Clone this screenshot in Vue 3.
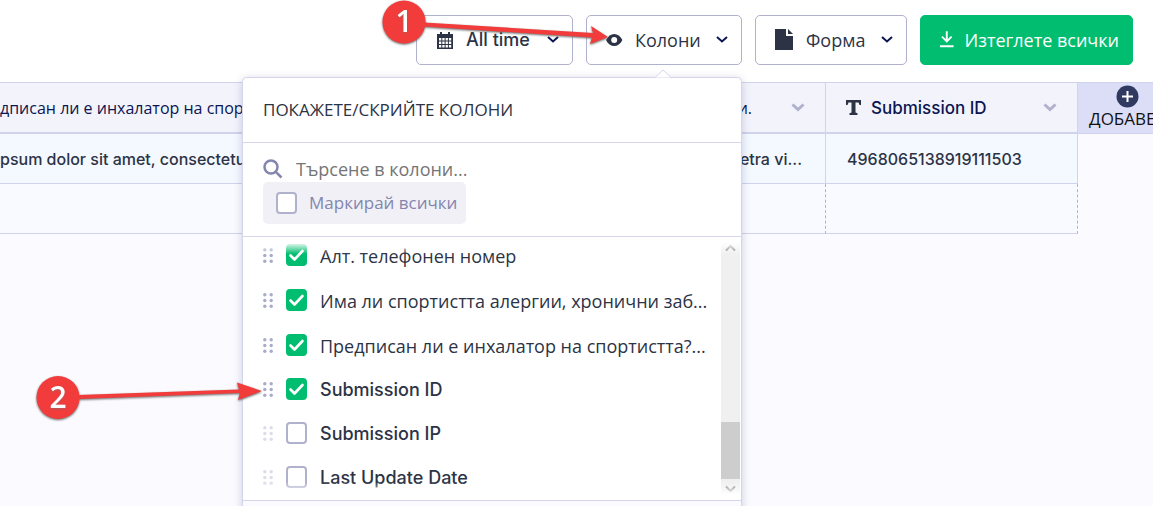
<script setup>
import { ref } from 'vue'

const search = ref('')
const all = ref(false)
const columns = ref([
  { label: 'Алт. телефонен номер', on: true },
  { label: 'Има ли спортистта алергии, хронични заб...', on: true },
  { label: 'Предписан ли е инхалатор на спортистта?...', on: true },
  { label: 'Submission ID', on: true, latin: true },
  { label: 'Submission IP', on: false, latin: true },
  { label: 'Last Update Date', on: false, latin: true },
])
</script>

<template>
  <div class="page">
    <header class="toolbar">
      <div class="holder">
        <button type="button" class="btn time latin">
          <svg class="icon" width="19" height="19" viewBox="0 0 19 19" fill="#2c3345">
            <path d="M1 3h3V1h2v2h6V1h2v2h3v15H1z" />
            <path d="M3 7h2.300v2.600H3zM6.300 7h2.300v2.600H6.300zM9.600 7h2.300v2.600H9.600zM12.900 7h2.300v2.600h-2.300zM3 10.600h2.300v2.400H3zM6.300 10.600h2.300v2.400H6.300zM9.600 10.600h2.300v2.400H9.600zM12.900 10.600h2.300v2.400h-2.300zM3 14h2.300v2.400H3zM6.300 14h2.300v2.400H6.300zM9.600 14h2.300v2.400H9.600zM12.900 14h2.300v2.400h-2.300z" fill="#fff" />
          </svg>
          <span>All time</span>
          <svg class="chev" width="12" height="8" viewBox="0 0 12 8"><path d="M1 1L6 5.500L11 1" /></svg>
        </button>
        <svg class="callout one" width="230" height="50" viewBox="0 0 230 50">
          <g class="shade">
            <path d="M42 22.500L211 33L209 26L226 37L208 44L210 37.500L42 26.500z" />
            <circle cx="22" cy="22" r="21.500" />
          </g>
          <text x="22" y="32">1</text>
        </svg>
      </div>

      <div class="holder">
        <button type="button" class="btn cols">
          <svg class="icon" width="17" height="14" viewBox="0 0 17 14">
            <path fill="#2c3345" d="M0 7C2 3 5 1 8.200 1s6.200 2 8.200 6c-2 4-5 6-8.200 6S2 11 0 7z" />
            <circle cx="8.200" cy="7" r="3" fill="#fff" />
          </svg>
          <span>Колони</span>
          <svg class="chev" width="12" height="8" viewBox="0 0 12 8"><path d="M1 1L6 5.500L11 1" /></svg>
        </button>

        <section class="panel">
          <svg class="caret" width="16" height="9" viewBox="0 0 16 9"><path d="M0 8.500L8 1l8 7.500" fill="#fff" stroke="#d5d6ec" /></svg>
          <h2>ПОКАЖЕТЕ/СКРИЙТЕ КОЛОНИ</h2>
          <div class="filter">
            <label class="search">
              <svg width="20" height="20" viewBox="0 0 20 20" fill="none" stroke="#8386ae" stroke-width="2.500">
                <circle cx="8" cy="8" r="6.500" /><path d="M12.800 12.800L18.500 18.500" />
              </svg>
              <input v-model="search" type="text" placeholder="Търсене в колони..." aria-label="Търсене в колони" />
            </label>
            <label class="all"><input v-model="all" type="checkbox" class="box" /><span>Маркирай всички</span></label>
          </div>
          <div class="scroller">
            <ul>
              <li v-for="c in columns" :key="c.label" :class="{ off: !c.on }">
                <svg class="grip" width="10" height="15" viewBox="0 0 10 15" fill="#a9abca">
                  <circle cx="1.800" cy="1.800" r="1.700" /><circle cx="8.200" cy="1.800" r="1.700" />
                  <circle cx="1.800" cy="7.500" r="1.700" /><circle cx="8.200" cy="7.500" r="1.700" />
                  <circle cx="1.800" cy="13.200" r="1.700" /><circle cx="8.200" cy="13.200" r="1.700" />
                </svg>
                <label>
                  <span class="tick">
                    <input v-model="c.on" type="checkbox" class="box" />
                    <svg v-if="c.on" width="21" height="22" viewBox="0 0 21 22"><path d="M4.500 11.500L8.500 15.500L16.500 7" /></svg>
                  </span>
                  <span class="name" :class="{ latin: c.latin }">{{ c.label }}</span>
                </label>
              </li>
            </ul>
            <div class="bar">
              <svg width="11" height="8" viewBox="0 0 11 8"><path d="M1 6.500L5.500 2L10 6.500" /></svg>
              <div class="thumb"></div>
              <svg width="11" height="8" viewBox="0 0 11 8"><path d="M1 1.500L5.500 6L10 1.500" /></svg>
            </div>
          </div>
          <footer></footer>
          <svg class="callout two" width="230" height="50" viewBox="0 0 230 50">
            <g class="shade">
              <path d="M42 21L203 15.500L201 8.500L226 17L202 26L204 19L42 25z" />
              <circle cx="22" cy="23.500" r="21.500" />
            </g>
            <text x="22" y="34">2</text>
          </svg>
        </section>
      </div>

      <button type="button" class="btn form">
        <svg class="icon" width="18" height="22" viewBox="0 0 18 22" fill="#2c3345">
          <path d="M0 0h11v7h7v14H0z" /><path d="M13 0v5h5z" />
        </svg>
        <span>Форма</span>
        <svg class="chev" width="12" height="8" viewBox="0 0 12 8"><path d="M1 1L6 5.500L11 1" /></svg>
      </button>

      <button type="button" class="btn download">
        <svg width="14" height="18" viewBox="0 0 14 18" fill="none" stroke="#fff" stroke-width="2">
          <path d="M7 0v10M2 5.500l5 5l5-5M0 15.500h14" />
        </svg>
        <span>Изтеглете всички</span>
      </button>
    </header>

    <table>
      <colgroup><col /><col class="c2" /><col class="c3" /><col class="c4" /></colgroup>
      <thead>
        <tr>
          <th class="first">дписан ли е инхалатор на спорт</th>
          <th class="mid"><div><span>алергии.</span>
            <svg width="14" height="9" viewBox="0 0 14 9"><path d="M1.500 1.500L7 6.500l5.500-5" /></svg></div></th>
          <th class="latin sid"><div>
            <svg class="tee" width="15" height="15" viewBox="0 0 15 15"><path d="M0 0h15v5h-1.500L12.500 2.500H9.500V12.500l2 .7V15h-8v-1.800l2-.7V2.500H2.500L1.500 5H0z" /></svg>
            <span>Submission ID</span>
            <svg class="end" width="14" height="9" viewBox="0 0 14 9"><path d="M1.500 1.500L7 6.500l5.500-5" /></svg></div></th>
          <th class="add">
            <button type="button">
              <svg width="23" height="23" viewBox="0 0 23 23"><circle cx="11.500" cy="11.500" r="11" fill="#303960" /><path d="M11.500 6v11M6 11.500h11" /></svg>
              <span>ДОБАВЕ</span>
            </button>
          </th>
        </tr>
      </thead>
      <tbody>
        <tr class="data latin">
          <td class="first">psum dolor sit amet, consectetur</td>
          <td class="mid">pharetra vi...</td>
          <td class="sid">4968065138919111503</td>
          <td class="none"></td>
        </tr>
        <tr class="blank"><td class="first"></td><td></td><td></td><td class="none"></td></tr>
      </tbody>
    </table>
  </div>
</template>

<style>
body { margin: 0; background: #fafaff; }
</style>

<style scoped>
* { box-sizing: border-box; }
.page { height: 100vh; overflow: hidden; background: #fafaff; color: #2c3345; font: 18px/24px "Open Sans", "Noto Sans", sans-serif; }
.latin { font-family: Inter, "Open Sans", sans-serif; font-weight: 500; }
button { font: inherit; color: inherit; cursor: pointer; }
.toolbar { display: flex; justify-content: flex-end; gap: 13px; padding: 15px 20px 17px; background: #fff; }
.holder { position: relative; z-index: 2; }
.holder:first-child { z-index: 3; }
.btn { display: flex; align-items: center; height: 50px; padding: 0 13px 0 19px; border: 1px solid #b0b1cc; border-radius: 5px; background: #fff; white-space: nowrap; }
.btn.latin { font-family: Inter, sans-serif; font-weight: 450; }
.btn .chev { margin-left: auto; }
.chev path { fill: none; stroke: #0a1551; stroke-width: 2; }
.time { width: 157px; gap: 11px; }
.cols { width: 156px; gap: 12px; }
.form { width: 152px; gap: 13px; }
.download { width: 213px; gap: 11px; border-color: #01bd6f; background: #01bd6f; color: #fff; }
.callout { position: absolute; z-index: 5; pointer-events: none; overflow: visible; }
.one { left: -34px; top: -15px; }
.two { left: -207px; top: 296px; }
.shade { fill: #f23b3b; filter: drop-shadow(0 1px 1px #666); }
.callout text { fill: #fff; font: 600 30px "Open Sans", sans-serif; text-anchor: middle; filter: drop-shadow(0 1px 1px #7778); }
.panel { position: absolute; top: 62px; right: 0; width: 500px; border: 1px solid #d5d6ec; border-radius: 5px; background: #fff; box-shadow: 0 2px 8px #54549044; }
.caret { position: absolute; left: 412px; top: -9px; }
h2 { margin: 0; padding: 20px; height: 65px; border-bottom: 1px solid #d5d6ec; font-size: 17px; line-height: 24px; font-weight: 400; }
.filter { height: 94px; padding: 13px 20px 0; border-bottom: 1px solid #d5d6ec; }
.search { display: flex; align-items: center; gap: 13px; height: 26px; }
.search input { flex: 1; min-width: 0; padding: 0; border: 0; outline: 0; background: none; font: inherit; color: inherit; }
.search input::placeholder { color: #757575; opacity: 1; }
.all { display: inline-flex; align-items: center; gap: 12px; height: 42px; padding: 0 9px 0 13px; border-radius: 5px; background: #f0f0f6; color: #8386ae; font-size: 17px; }
.box { appearance: none; display: block; flex: none; width: 21px; height: 22px; margin: 0; border: 2px solid #b0b1cc; border-radius: 4px; background: #fff; }
.scroller { position: relative; display: flex; height: 263px; padding: 3px 1px 6px 20px; }
.scroller::before { content: ""; position: absolute; inset: 0 0 auto; height: 17px; background: linear-gradient(#fff 30%, #fff0); z-index: 1; }
.scroller::after { content: ""; position: absolute; inset: auto 0 0; height: 18px; background: linear-gradient(#fff0, #fff 75%); z-index: 1; }
ul { flex: 1; min-width: 0; margin: 0; padding: 0; list-style: none; overflow: hidden; }
li { display: flex; align-items: center; gap: 13px; height: 44px; margin-top: 1px; }
li:first-child { margin-top: -7px; }
li.off, li:nth-child(4) { margin-top: 0; }
li label { display: flex; align-items: center; gap: 13px; white-space: nowrap; }
.name { padding-top: 2px; }
.name.latin { font-weight: 450; }
.off .grip { opacity: .4; }
.tick { position: relative; display: block; }
.tick svg { position: absolute; inset: 0; pointer-events: none; fill: none; stroke: #fff; stroke-width: 2.6; stroke-linecap: round; stroke-linejoin: round; }
.box:checked { background: #01bd6f; border-color: #01bd6f; }
.bar { display: flex; flex-direction: column; align-items: center; width: 19px; padding: 4px 0 1px; background: #f0f0f0; }
.bar path { fill: none; stroke: #888; stroke-width: 2; }
.bar .thumb { width: 19px; height: 57px; margin: auto 0 6px; background: #cdcdcd; }
footer { height: 60px; border-top: 1px solid #d5d6ec; background: #fbfbff; }
table { width: 100%; table-layout: fixed; border-collapse: separate; border-spacing: 0; }
.c2 { width: 200px; } .c3 { width: 252px; } .c4 { width: 75px; }
th { height: 52px; padding: 0; border: solid #d0d3ec; border-width: 1px 1px 2px 0; background: #f3f3fc; color: #0a1551; font-size: 16px; font-weight: 400; text-align: left; white-space: nowrap; overflow: hidden; }
th.latin { font-size: 17px; font-weight: 500; }
th div { display: flex; align-items: center; }
th svg { flex: none; }
th path { fill: none; stroke: #b0b1cc; stroke-width: 3; }
th .tee path { fill: #2c3345; stroke: none; }
th.mid div { justify-content: flex-end; gap: 39px; padding-right: 20px; }
th.sid div { gap: 10px; padding: 0 20px; }
th .end { margin-left: auto; }
th.add { background: #dcdef8; border-right: 0; border-bottom-width: 1px; }
.add button { display: flex; flex-direction: column; align-items: center; height: 50px; width: 98px; padding: 2px 0 0; border: 0; background: none; color: #111; font-size: 17px; line-height: 22px; }
.add span { align-self: flex-start; padding-left: 11px; }
th.add path { stroke: #fff; stroke-width: 2; }
td { height: 50px; padding: 0 23px; border: solid #d0d3ec; border-width: 0 1px 1px 0; background: #f4f8ff; white-space: nowrap; overflow: hidden; }
td.first { padding: 0; }
td.mid { text-align: right; }
td.sid { padding: 0 21px; }
.latin td { font-size: 16px; }
.blank td { background: #f9faff; border-right: 1px dashed #b0b1cc; }
td.none, .blank td.none { background: none; border: 0; }
</style>
